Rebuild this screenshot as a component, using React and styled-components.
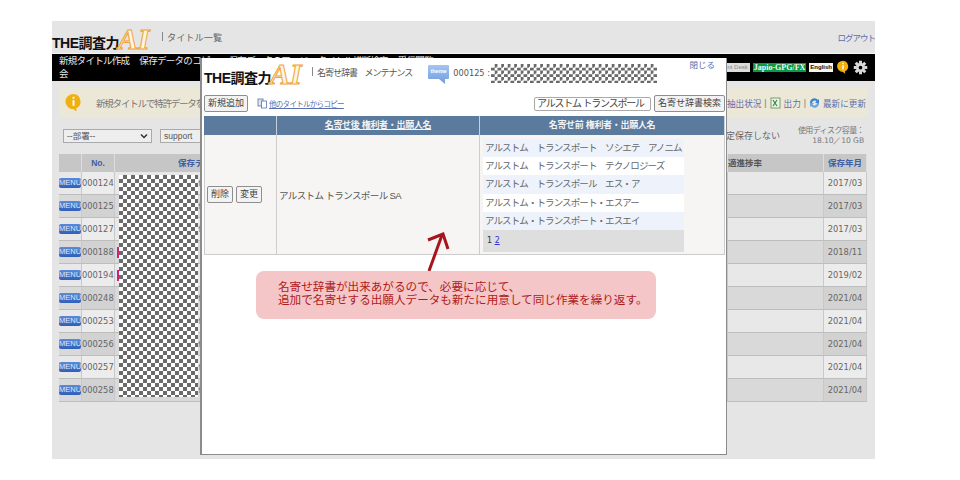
import React from 'react';
import styled, { createGlobalStyle } from 'styled-components';

const Global = createGlobalStyle`
  html, body { margin: 0; padding: 0; background: #fff; }
  body { font-family: "Liberation Sans", "Noto Sans CJK JP", sans-serif; color: #555; width: 960px; height: 480px; overflow: hidden; }
  * { box-sizing: border-box; }
`;

const Stage = styled.div`
  padding: 21px 85px 21px 52px;
  height: 480px;
`;
const Page = styled.div`
  position: relative;
  width: 823px;
  height: 438px;
  background: #e5e5e5;
  display: flex;
  flex-direction: column;
`;
const TopBar = styled.header`
  height: 32px;
  display: flex;
  align-items: flex-end;
  justify-content: space-between;
`;
const LogoWrap = styled.div`
  display: flex;
  align-items: flex-end;
  height: 26px;
  width: ${p => p.$w}px;
  flex: none;
  margin-bottom: ${p => p.$mb}px;
`;
const LogoThe = styled.span`
  font: 700 14px/14px "Liberation Sans", "Noto Sans CJK JP", sans-serif;
  color: #111;
  letter-spacing: -0.5px;
  white-space: nowrap;
`;
const LogoAI = styled.span`
  font: italic 700 30px/26px "Liberation Serif", serif;
  color: #fff4dc;
  -webkit-text-stroke: 1px #eea33c;
  margin-left: -1px;
  height: 24px;
`;
const TitleText = styled.div`
  font-size: 9.2px;
  color: #666;
  margin: 0 auto 8px 10px;
  line-height: 14px;
  white-space: nowrap;
  &::before { content: ""; display: inline-block; width: 1px; height: 9px; background: #888; margin-right: 4px; }
`;
const Logout = styled.a`
  font-size: 8.5px;
  letter-spacing: -1px;
  color: #5a70ad;
  line-height: 13px;
  margin-bottom: 8px;
  white-space: nowrap;
`;
const Nav = styled.nav`
  height: 28px;
  background: #000;
  display: flex;
  justify-content: space-between;
  padding: 0 7px 0 7px;
  border-top: 1px solid #f5f5f5;
`;
const NavText = styled.div`
  color: #e8e8e8;
  font-size: 9.5px;
  line-height: 13px;
  letter-spacing: -0.7px;
  word-spacing: 8px;
  white-space: nowrap;
`;
const NavRight = styled.div`
  display: flex;
  align-items: center;
  gap: 3px;
  height: 26px;
`;
const GrayTag = styled.span`
  background: #ddd;
  color: #888;
  font-size: 6px;
  padding: 1px 2px;
  line-height: 7px;
  white-space: nowrap;
`;
const JapioTag = styled.span`
  background: #0c9a47;
  color: #f4f4f4;
  font: 700 8px/9px "Liberation Serif", serif;
  padding: 0 1px;
  white-space: nowrap;
`;
const EnglishTag = styled.span`
  background: #f4f4f4;
  color: #111;
  font: 700 6px/9px "Liberation Sans", sans-serif;
  padding: 0 1px;
`;
const Notice = styled.div`
  height: 29px;
  margin: 7px 8px 0 7px;
  background: #ece8d8;
  display: flex;
  align-items: center;
  justify-content: space-between;
  padding: 0 1px 0 5px;
  font-size: 9.5px;
  color: #777;
`;
const NoticeLeft = styled.div`
  display: flex;
  align-items: center;
  gap: 13px;
  white-space: nowrap;
  letter-spacing: -1.2px;
`;
const NoticeRight = styled.div`
  display: flex;
  align-items: center;
  gap: 3px;
  color: #5a70ad;
  white-space: nowrap;
  font-size: 8.6px;
`;
const Pipe = styled.span`color: #777;`;
const Filter = styled.div`
  height: 37px;
  margin: 0 7px;
  display: flex;
  align-items: center;
  justify-content: space-between;
  padding: 0 4px;
`;
const FilterLeft = styled.div`
  display: flex;
  gap: 8px;
  align-items: center;
`;
const FakeSelect = styled.div`
  height: 14px;
  width: ${p => p.$w}px;
  border: 1px solid #aaa;
  background: #eee;
  font-size: 8.5px;
  color: #555;
  line-height: 12px;
  padding: 0 3px;
  display: flex;
  justify-content: space-between;
  align-items: center;
`;
const FilterRight = styled.div`
  display: flex;
  gap: 18px;
  align-items: center;
  font-size: 9px;
  color: #666;
  white-space: nowrap;
`;
const Disk = styled.div`
  text-align: right;
  font-size: 8px;
  line-height: 10px;
  color: #777;
  letter-spacing: -0.6px;
`;
const DiskNum = styled.div`
  font: 7.6px/10px "DejaVu Sans", sans-serif;
  letter-spacing: -0.1px;
`;
const BackTable = styled.div`
  position: relative;
  margin: 0 7px;
  width: 808px;
  display: grid;
  grid-template-columns: 23px 33px 613px 96px 43px;
  grid-template-rows: 18px repeat(10, 23px);
`;
const HeadCell = styled.div`
  background: #c6c6c6;
  color: ${p => (p.$plain ? '#555' : '#3f5ea5')};
  font: 700 8.5px/18px "Liberation Sans", "Noto Sans CJK JP", sans-serif;
  text-align: ${p => p.$align || 'center'};
  border-right: 1px solid #ddd;
  overflow: hidden;
  white-space: nowrap;
  padding-left: ${p => p.$pl || 0}px;
`;
const Cell = styled.div`
  background: ${p => (p.$dark ? (p.$tint ? '#d2d2d2' : '#d9d9d9') : (p.$tint ? '#ececec' : '#e8e8e8'))};
  border-bottom: 1px solid #bdbdbd;
  border-right: 1px solid #c8c8c8;
  font: 8.3px/22px "DejaVu Sans", sans-serif;
  color: #666;
  display: flex;
  align-items: center;
  position: relative;
  white-space: nowrap;
  justify-content: ${p => (p.$center ? 'center' : 'flex-start')};
`;
const MenuBtn = styled.span`
  background: linear-gradient(#5c8ad8, #2f5fb8);
  color: #dfe7fa;
  font: 7.5px/10px "Liberation Sans", sans-serif;
  width: 23px;
  height: 10px;
  text-align: center;
  border-radius: 2px;
`;
const Pink = styled.span`
  position: absolute;
  left: 2px;
  top: 6px;
  width: 2px;
  height: 11px;
  background: #d0207a;
`;
const RowLink = styled.span`
  position: absolute;
  left: 83px;
  color: #3f5ea5;
  font-size: 8px;
`;
const Checker = styled.div`
  position: absolute;
  left: 60px;
  top: 21px;
  width: 79px;
  height: 222px;
  background-color: #fff;
  background-image: conic-gradient(#6a6a6a 25%, #fff 0 50%, #6a6a6a 0 75%, #fff 0);
  background-size: 8px 8px;
`;

const Modal = styled.section`
  position: absolute;
  left: 148px;
  top: 37px;
  width: 527px;
  height: 397px;
  background: #fff;
  border: solid #8c8c8c;
  border-width: 0 1px 1px 2px;
  padding: 0 1px 0 2px;
  display: flex;
  flex-direction: column;
`;
const ModalHead = styled.div`
  height: 33px;
  display: flex;
  align-items: flex-end;
  position: relative;
  padding-bottom: 8px;
`;
const ModalTitle = styled.div`
  font-size: 9px;
  letter-spacing: -1px;
  word-spacing: 6px;
  color: #555;
  margin: 0 0 3px 12px;
  line-height: 13px;
  white-space: nowrap;
  &::before { content: ""; display: inline-block; width: 1px; height: 9px; background: #888; margin-right: 4px; }
`;
const ThemeIcon = styled.div`
  margin: 0 0 -2px 16px;
  height: 21px;
  width: 21px;
  flex: none;
`;
const ThemeNo = styled.div`
  font: 8.2px/13px "DejaVu Sans", sans-serif;
  color: #555;
  margin: 0 0 3px 4px;
  width: 38px;
  white-space: nowrap;
`;
const CheckerTitle = styled.div`
  width: 166px;
  height: 19px;
  background-color: #fff;
  background-image: conic-gradient(#6a6a6a 25%, #fff 0 50%, #6a6a6a 0 75%, #fff 0);
  background-size: 6.5px 6.5px;
`;
const Close = styled.a`
  position: absolute;
  right: 10px;
  top: 1px;
  font-size: 8.5px;
  line-height: 12px;
  color: #5a70ad;
`;
const ToolRow = styled.div`
  display: flex;
  align-items: center;
  height: 23px;
  margin-top: 1px;
  justify-content: space-between;
`;
const ToolLeft = styled.div`
  display: flex;
  align-items: center;
  gap: 9px;
`;
const ToolRight = styled.div`
  display: flex;
  align-items: center;
  gap: 3px;
`;
const Btn = styled.button`
  font: 9px/13px "Liberation Sans", "Noto Sans CJK JP", sans-serif;
  height: 17px;
  padding: 0 3px;
  color: #444;
  background: #f3f3f3;
  border: 1px solid #8e8e8e;
  border-radius: 2px;
  white-space: nowrap;
`;
const SearchInput = styled.div`
  font-size: 10px;
  letter-spacing: -1.2px;
  line-height: 12px;
  height: 14px;
  width: 117px;
  border: 1px solid #aaa;
  border-radius: 2px;
  color: #444;
  padding-left: 2px;
  white-space: nowrap;
`;
const CopyLink = styled.a`
  display: flex;
  align-items: center;
  gap: 1px;
  font-size: 7.5px;
  letter-spacing: -0.7px;
  color: #5a70ad;
  text-decoration: underline;
  white-space: nowrap;
`;
const DictTable = styled.div`
  display: grid;
  grid-template-columns: 73px 203px 245px;
  margin-top: 1px;
  width: 521px;
`;
const DictHead = styled.div`
  background: #5a7a9e;
  height: 19px;
  color: #f4f4f4;
  font: 700 9px/19px "Liberation Sans", "Noto Sans CJK JP", sans-serif;
  letter-spacing: -0.3px;
  text-align: center;
  border-right: 1px solid #c8d0da;
  text-decoration: ${p => (p.$u ? 'underline' : 'none')};
`;
const DictCell = styled.div`
  background: #f6f5f3;
  height: 120px;
  border-right: 1px solid #ccc;
  border-bottom: 1px solid #ccc;
  border-left: ${p => (p.$first ? '1px solid #ccc' : '0')};
  display: flex;
  align-items: center;
  gap: 3px;
  padding: ${p => p.$pad || '0 2px'};
  font-size: 9.5px;
  letter-spacing: -0.6px;
  color: #555;
  white-space: nowrap;
`;
const NameList = styled.div`
  width: 201px;
  align-self: flex-start;
  margin-top: 4px;
  font-size: 9.5px;
  letter-spacing: -0.9px;
  color: #666;
`;
const NameRow = styled.div`
  height: 18.2px;
  line-height: 18px;
  padding-left: 2px;
  white-space: pre;
  background: ${p => (p.$alt ? '#eef3fb' : '#fff')};
`;
const Pager = styled.div`
  height: 22px;
  background: #dedede;
  padding-left: 4px;
  font: 8px/22px "DejaVu Sans", sans-serif;
  letter-spacing: 0;
  color: #333;
  a { color: #3333dd; text-decoration: underline; }
`;
const Annotation = styled.div`
  position: absolute;
  left: 204px;
  top: 250px;
  width: 400px;
  height: 48px;
  background: #f4c6c8;
  border-radius: 8px;
  color: #b01a1a;
  font-size: 11.6px;
  line-height: 13px;
  padding: 9px 0 0 22px;
  white-space: nowrap;
`;
const ArrowSvg = styled.svg`
  position: absolute;
  left: 370px;
  top: 208px;
`;

const RedArrow = () => (
  <ArrowSvg width="30" height="44" viewBox="0 0 30 44">
    <path d="M7 42 L20 6" stroke="#a8141c" strokeWidth="3" fill="none" />
    <path d="M6 11 L21 5 L26 20" stroke="#a8141c" strokeWidth="3" fill="none" />
  </ArrowSvg>
);

const Logo = ({ w, mb }) => (
  <LogoWrap $w={w} $mb={mb}>
    <LogoThe>THE調査力</LogoThe>
    <LogoAI>AI</LogoAI>
  </LogoWrap>
);

const InfoIcon = ({ s = 14 }) => (
  <svg width={s} height={s} viewBox="0 0 20 20">
    <path d="M10 1a8.5 8 0 1 0 0 16l3 2.5v-3.4A8 8 0 0 0 10 1z" fill="#f0b010" />
    <rect x="9" y="4" width="2" height="2" fill="#fff" />
    <rect x="9" y="7.5" width="2" height="6" fill="#fff" />
  </svg>
);
const Gear = () => (
  <svg width="15" height="15" viewBox="0 0 20 20">
    <g fill="#d8d8d8">
      <path fillRule="evenodd" d="M10 4a6 6 0 1 0 0 12a6 6 0 0 0 0-12zm0 3.5a2.5 2.5 0 1 1 0 5a2.5 2.5 0 0 1 0-5z" />
      <rect x="8" y="1" width="4" height="4" />
      <rect x="8" y="15" width="4" height="4" />
      <rect x="1" y="8" width="4" height="4" />
      <rect x="15" y="8" width="4" height="4" />
      <rect x="8" y="1" width="4" height="4" transform="rotate(45 10 10)" />
      <rect x="8" y="15" width="4" height="4" transform="rotate(45 10 10)" />
      <rect x="1" y="8" width="4" height="4" transform="rotate(45 10 10)" />
      <rect x="15" y="8" width="4" height="4" transform="rotate(45 10 10)" />
    </g>
  </svg>
);
const ThemeBubble = () => (
  <svg width="21" height="21" viewBox="0 0 21 21">
    <defs>
      <linearGradient id="tb" x1="0" y1="0" x2="0" y2="1">
        <stop offset="0" stopColor="#a5c4f0" />
        <stop offset="1" stopColor="#6f9ce0" />
      </linearGradient>
    </defs>
    <path d="M1 1h19a1 1 0 0 1 1 1v12a1 1 0 0 1-1 1h-3v5l-6-5H1a1 1 0 0 1-1-1V2a1 1 0 0 1 1-1z" fill="url(#tb)" />
    <text x="10.5" y="9" textAnchor="middle" fontSize="5.5" fontWeight="700" fill="#fff" fontFamily="Liberation Sans, sans-serif">theme</text>
  </svg>
);
const CopyIcon = () => (
  <svg width="11" height="11" viewBox="0 0 11 11">
    <rect x="1" y="1" width="5" height="7" fill="#dfe6f3" stroke="#5a70ad" strokeWidth="0.8" />
    <rect x="4.5" y="3" width="5" height="7" fill="#fff" stroke="#5a70ad" strokeWidth="0.8" />
  </svg>
);
const ExcelIcon = () => (
  <svg width="11" height="12" viewBox="0 0 11 12">
    <rect x="1" y="1" width="9" height="10" fill="#eef3ea" stroke="#7a9a70" />
    <path d="M3 3l4 6M7 3L3 9" stroke="#2a8a3a" strokeWidth="1.2" />
  </svg>
);
const RefreshIcon = () => (
  <svg width="11" height="11" viewBox="0 0 11 11">
    <path d="M1 6a4.5 4.5 0 0 1 8-3l1-1v4H6l1.5-1.5A2.5 2.5 0 0 0 3 6z" fill="#3b82d0" />
    <path d="M10 6a4.5 4.5 0 0 1-8 3l-1 1V6h4L3.5 7.5A2.5 2.5 0 0 0 8 6z" fill="#6aa5e0" />
  </svg>
);
const Chevron = () => (
  <svg width="8" height="6" viewBox="0 0 8 6">
    <path d="M1 1.5l3 3 3-3" stroke="#333" strokeWidth="1.5" fill="none" />
  </svg>
);

const rows = [
  ['000124', '2017/03'],
  ['000125', '2017/03'],
  ['000127', '2017/03'],
  ['000188', '2018/11', true],
  ['000194', '2019/02', true],
  ['000248', '2021/04'],
  ['000253', '2021/04'],
  ['000256', '2021/04'],
  ['000257', '2021/04'],
  ['000258', '2021/04'],
];

const names = [
  'アルストム　トランスポート　ソシエテ　アノニム',
  'アルストム　トランスポート　テクノロジーズ',
  'アルストム　トランスポール　エス・ア',
  'アルストム・トランスポート・エスアー',
  'アルストム・トランスポート・エスエイ',
];

export default function App() {
  return (
    <>
      <Global />
      <Stage>
        <Page>
          <TopBar>
            <Logo w={100} mb={3} />
            <TitleText>タイトル一覧</TitleText>
            <Logout>ログアウト</Logout>
          </TopBar>
          <Nav>
            <NavText>新規タイトル作成 保存データのコピー 保存データのマージ タイトル横断検索 受信閲覧<br />会</NavText>
            <NavRight>
              <GrayTag>Patent Desk</GrayTag>
              <JapioTag>Japio-GPG/FX</JapioTag>
              <EnglishTag>English</EnglishTag>
              <InfoIcon />
              <Gear />
            </NavRight>
          </Nav>
          <Notice>
            <NoticeLeft>
              <InfoIcon s={19} />
              <span>新規タイトルで特許データを</span>
            </NoticeLeft>
            <NoticeRight>
              <span>抽出状況</span><Pipe>|</Pipe><ExcelIcon /><span>出力</span><Pipe>|</Pipe><RefreshIcon /><span>最新に更新</span>
            </NoticeRight>
          </Notice>
          <Filter>
            <FilterLeft>
              <FakeSelect $w={89}>--部署--<Chevron /></FakeSelect>
              <FakeSelect $w={60}>support</FakeSelect>
            </FilterLeft>
            <FilterRight>
              <span>定保存しない</span>
              <Disk>使用ディスク容量：<DiskNum>18.10／10 GB</DiskNum></Disk>
            </FilterRight>
          </Filter>
          <BackTable>
            <HeadCell />
            <HeadCell>No.</HeadCell>
            <HeadCell $align="left" $pl={63}>保存データ</HeadCell>
            <HeadCell $plain $align="left">適進捗率</HeadCell>
            <HeadCell>保存年月</HeadCell>
            {rows.map(([no, date, pink], i) => {
              const dark = i % 2 === 1;
              return (
                <React.Fragment key={no}>
                  <Cell $dark={dark}><MenuBtn>MENU</MenuBtn></Cell>
                  <Cell $dark={dark} $tint>{no}</Cell>
                  <Cell $dark={dark}>
                    {pink ? <Pink /> : <RowLink>保</RowLink>}
                  </Cell>
                  <Cell $dark={dark} />
                  <Cell $dark={dark} $tint $center>{date}</Cell>
                </React.Fragment>
              );
            })}
            <Checker />
          </BackTable>

          <Modal>
            <ModalHead>
              <Logo w={96} mb={-2} />
              <ModalTitle>名寄せ辞書 メンテナンス</ModalTitle>
              <ThemeIcon><ThemeBubble /></ThemeIcon>
              <ThemeNo>000125 :</ThemeNo>
              <CheckerTitle />
              <Close>閉じる</Close>
            </ModalHead>
            <ToolRow>
              <ToolLeft>
                <Btn>新規追加</Btn>
                <CopyLink><CopyIcon />他のタイトルからコピー</CopyLink>
              </ToolLeft>
              <ToolRight>
                <SearchInput>アルストム トランスポール</SearchInput>
                <Btn>名寄せ辞書検索</Btn>
              </ToolRight>
            </ToolRow>
            <DictTable>
              <DictHead />
              <DictHead $u>名寄せ後 権利者・出願人名</DictHead>
              <DictHead>名寄せ前 権利者・出願人名</DictHead>
              <DictCell $first>
                <Btn>削除</Btn>
                <Btn>変更</Btn>
              </DictCell>
              <DictCell>アルストム トランスポール SA</DictCell>
              <DictCell $pad="0 3px">
                <NameList>
                  {names.map((n, i) => <NameRow key={n} $alt={i % 2 === 0}>{n}</NameRow>)}
                  <Pager>1 <a>2</a></Pager>
                </NameList>
              </DictCell>
            </DictTable>
          </Modal>
          <RedArrow />
          <Annotation>
            名寄せ辞書が出来あがるので、必要に応じて、<br />
            追加で名寄せする出願人データも新たに用意して同じ作業を繰り返す。
          </Annotation>
        </Page>
      </Stage>
    </>
  );
}
